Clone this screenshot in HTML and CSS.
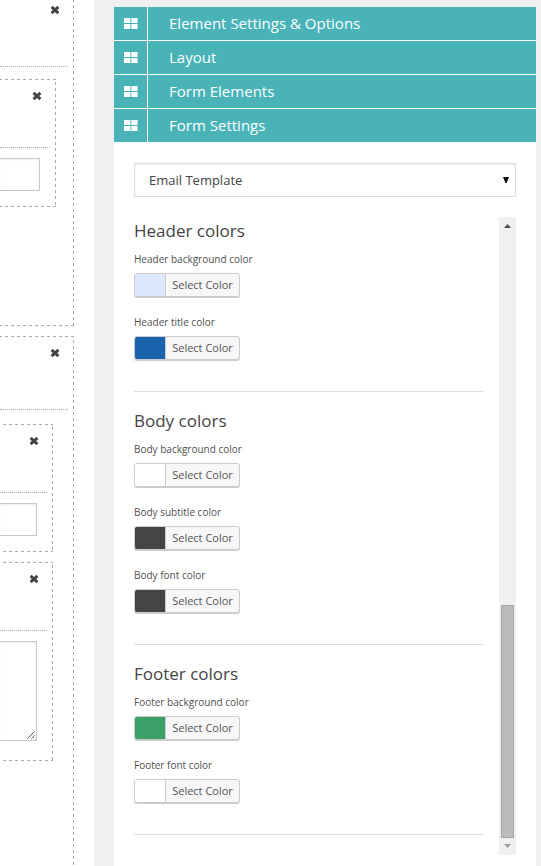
FILE: index.html
```html
<!DOCTYPE html>
<html lang="en">
<head>
<meta charset="utf-8">
<title>Form builder</title>
<link rel="stylesheet" href="styles.css">
</head>
<body>
<svg class="symbols" width="0" height="0">
  <symbol id="cross" viewBox="0 0 10 10"><path d="M1.6 1.9 8.4 8.1M8.4 1.9 1.6 8.1" stroke="#444" stroke-width="3"/></symbol>
  <symbol id="tiles" viewBox="0 0 14 11"><path d="M0 0H6.4V5H0ZM7.3 0H13.6V5H7.3ZM0 6H6.4V11H0ZM7.3 6H13.6V11H7.3Z" fill="#fff"/></symbol>
</svg>
<div class="app">
  <main class="canvas">
    <section class="block first">
      <header class="bar"><svg class="cross"><use href="#cross"/></svg></header>
      <div class="element wide">
        <header class="bar"><svg class="cross"><use href="#cross"/></svg></header>
        <div class="input"></div>
      </div>
    </section>
    <section class="block second">
      <header class="bar"><svg class="cross"><use href="#cross"/></svg></header>
      <div class="element">
        <header class="bar"><svg class="cross"><use href="#cross"/></svg></header>
        <div class="input"></div>
      </div>
      <div class="element">
        <header class="bar"><svg class="cross"><use href="#cross"/></svg></header>
        <div class="input area"><svg class="grip" viewBox="0 0 8 8"><path d="M.5 7.5 7.5 .5M4.5 7.5 7.5 4.5"/></svg></div>
      </div>
    </section>
  </main>
  <aside class="panel">
    <nav class="accordion">
      <div class="tab"><span class="tab-icon"><svg><use href="#tiles"/></svg></span><span class="tab-title">Element Settings &amp; Options</span></div>
      <div class="tab"><span class="tab-icon"><svg><use href="#tiles"/></svg></span><span class="tab-title">Layout</span></div>
      <div class="tab"><span class="tab-icon"><svg><use href="#tiles"/></svg></span><span class="tab-title">Form Elements</span></div>
      <div class="tab"><span class="tab-icon"><svg><use href="#tiles"/></svg></span><span class="tab-title">Form Settings</span></div>
    </nav>
    <div class="select"><span>Email Template</span><svg class="caret" viewBox="0 0 6 6"><path d="M0 0H6L3.5 6H2.5Z"/></svg></div>
    <div class="scroller">
      <div class="groups">
        <section class="group">
          <h2>Header colors</h2>
          <div class="field"><label>Header background color</label><button class="picker"><i class="swatch sky"></i><span>Select Color</span></button></div>
          <div class="field"><label>Header title color</label><button class="picker"><i class="swatch blue"></i><span>Select Color</span></button></div>
        </section>
        <section class="group">
          <h2>Body colors</h2>
          <div class="field"><label>Body background color</label><button class="picker"><i class="swatch"></i><span>Select Color</span></button></div>
          <div class="field"><label>Body subtitle color</label><button class="picker"><i class="swatch dark"></i><span>Select Color</span></button></div>
          <div class="field"><label>Body font color</label><button class="picker"><i class="swatch dark"></i><span>Select Color</span></button></div>
        </section>
        <section class="group">
          <h2>Footer colors</h2>
          <div class="field"><label>Footer background color</label><button class="picker"><i class="swatch green"></i><span>Select Color</span></button></div>
          <div class="field"><label>Footer font color</label><button class="picker"><i class="swatch"></i><span>Select Color</span></button></div>
        </section>
      </div>
      <div class="scrollbar">
        <svg class="arrow up" viewBox="0 0 7 4"><path d="M3.5 0 7 4H0Z"/></svg>
        <div class="thumb"></div>
        <svg class="arrow down" viewBox="0 0 7 4"><path d="M0 0H7L3.5 4Z"/></svg>
      </div>
    </div>
  </aside>
</div>
</body>
</html>
```
FILE: styles.css
```css
* { box-sizing: border-box; }
body { margin: 0; background: #f0f0f0; font-family: "Open Sans", sans-serif; color: #444; }
svg { display: block; }
.symbols { position: absolute; }
.app { display: flex; height: 866px; overflow: hidden; }

/* form canvas */
.canvas { width: 94px; height: 866px; background: #fff; overflow: hidden; }

/* even 3px dashes along the top, bottom and right edges */
.block, .element {
  --across: linear-gradient(90deg, #aaa 3px, transparent 3px);
  --down: linear-gradient(#aaa 3px, transparent 3px);
  border: 1px solid transparent;
  border-left: 0;
  background-origin: border-box;
  background-image: var(--across), var(--across), var(--down);
  background-size: 6px 1px, 6px 1px, 1px 6px;
  background-repeat: repeat-x, repeat-x, repeat-y;
  background-position: var(--x) 0, var(--x) 100%, 100% var(--y);
}
.block { --x: 5px; --y: 4px; width: 74px; }
.first { --y: 5px; height: 326px; border-top: 0; margin-bottom: 10px; background-size: 0 0, 6px 1px, 1px 6px; }
.second { height: 540px; }
.bar { display: flex; justify-content: flex-end; margin-right: 5px; padding: 11px 8px 0 0; height: 73px; border-bottom: 1px dotted #aaa; }
.first > .bar { height: 67px; padding-top: 5px; }
.cross { width: 10px; height: 10px; }
.element { --x: 3px; --y: 3px; width: 53px; margin: 14px 0 -4px; height: 128px; }
.first .element { margin-top: 12px; }
.element.wide { --x: 5px; width: 56px; }
.element + .element { margin-top: 14px; height: 199px; }
.element .bar { height: 68px; }
.input { width: 37px; height: 33px; margin-top: 10px; border: 1px solid #c8c8c8; border-left: 0; box-shadow: inset 0 1px 2px rgba(0,0,0,.07); }
.wide .input { width: 40px; }
.input.area { height: 100px; display: flex; justify-content: flex-end; align-items: flex-end; padding: 1px; }
.grip { width: 8px; height: 8px; fill: none; stroke: #555; }

/* settings panel */
.panel { width: 422px; margin: 7px 0 0 20px; background: #fff; }
.accordion { display: flex; flex-direction: column; gap: 1px; }
.tab { display: flex; gap: 1px; height: 33px; color: #fff; font-size: 15px; line-height: 33px; }
.tab-icon { width: 33px; display: flex; align-items: center; background: #49b3b7; padding-left: 10px; }
.tab-icon svg { width: 14px; height: 11px; }
.tab-title { flex: 1; background: #49b3b7; padding-left: 21px; letter-spacing: .01px; }
.select { display: flex; justify-content: space-between; align-items: center; height: 34px; margin: 21px 20px 20px; padding: 0 6px 0 14px; border: 1px solid #ddd; box-shadow: inset 0 1px 2px rgba(0,0,0,.07); font-size: 13px; }
.caret { width: 6px; height: 6px; fill: #000; }
.scroller { display: flex; justify-content: space-between; height: 638px; margin: 0 20px; }
.groups { width: 350px; }
.group { padding: 17px 0 14px; border-bottom: 1px solid #ddd; }
.group:first-child { padding-top: 2px; }
h2 { margin: 0 0 8px; font-size: 17px; line-height: 24px; font-weight: 400; }
.field { height: 63px; }
label { display: block; height: 22px; font-size: 10px; line-height: 16px; color: #505050; }
.picker { display: flex; width: 106px; height: 24px; padding: 0; border: 1px solid #ccc; border-radius: 3px; background: #f7f7f7; box-shadow: 0 1px 0 #ccc; overflow: hidden; font: 11px/22px "Open Sans", sans-serif; color: #555; }
.swatch { width: 30px; height: 22px; background: #fff; }
.sky { background: #dbe8fe; }
.blue { background: #1a62ae; }
.dark { background: #444; }
.green { background: #3ba067; }
.picker span { flex: 1; border-left: 1px solid #ccc; }
.scrollbar { width: 17px; background: #f0f0f0; display: flex; flex-direction: column; align-items: center; padding: 7px 0 7px; }
.arrow { width: 7px; height: 4px; }
.up { fill: #505050; }
.down { fill: #a0a0a0; margin-top: auto; }
.thumb { width: 13px; height: 233px; margin-top: 377px; background: #bcbcbc; border: 1px solid #a6a6a6; }
```
